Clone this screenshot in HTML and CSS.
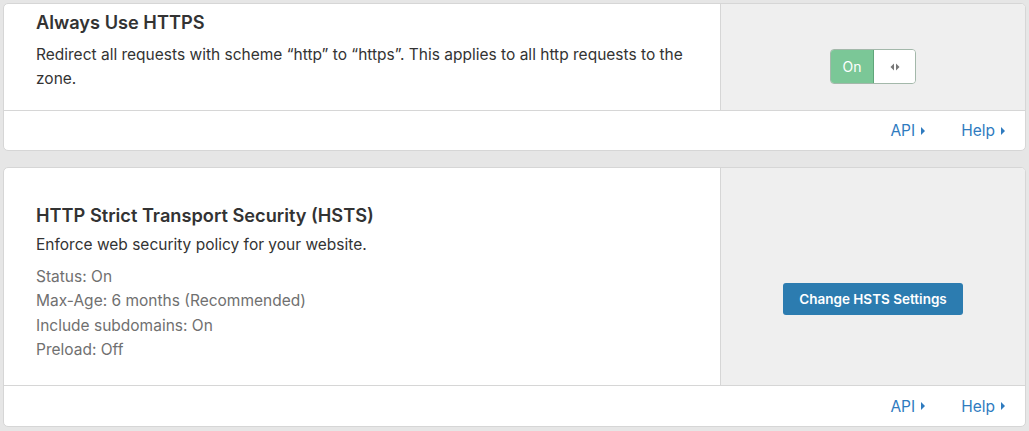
FILE: index.html
```html
<!DOCTYPE html>
<html>
<head>
<meta charset="utf-8">
<link rel="stylesheet" href="styles.css">
</head>
<body>
<div class="page">
  <section class="card">
    <div class="card-body card-body--https">
      <div class="main">
        <h3 class="title">Always Use HTTPS</h3>
        <p class="desc">Redirect all requests with scheme “http” to “https”. This applies to all http requests to the zone.</p>
      </div>
      <div class="side side--toggle">
        <div class="toggle">
          <span class="toggle-on">On</span>
          <span class="toggle-knob">
            <svg width="10" height="8" viewBox="0 0 10 8"><path d="M4 0.5 L0.5 4 L4 7.5 Z" fill="#777"/><path d="M6 0.5 L9.5 4 L6 7.5 Z" fill="#777"/></svg>
          </span>
        </div>
      </div>
    </div>
    <div class="card-footer">
      <a class="link">API <span class="tri"></span></a>
      <a class="link">Help <span class="tri"></span></a>
    </div>
  </section>

  <section class="card">
    <div class="card-body card-body--hsts">
      <div class="main main--hsts">
        <h3 class="title">HTTP Strict Transport Security (HSTS)</h3>
        <p class="desc">Enforce web security policy for your website.</p>
        <ul class="status">
          <li>Status: On</li>
          <li>Max-Age: 6 months (Recommended)</li>
          <li>Include subdomains: On</li>
          <li>Preload: Off</li>
        </ul>
      </div>
      <div class="side side--button">
        <button class="btn">Change HSTS Settings</button>
      </div>
    </div>
    <div class="card-footer card-footer--tall">
      <a class="link">API <span class="tri"></span></a>
      <a class="link">Help <span class="tri"></span></a>
    </div>
  </section>
</div>
</body>
</html>
```
FILE: styles.css
```css
* { box-sizing: border-box; }
html, body { margin: 0; padding: 0; }
body {
  background: #e6e6e6;
  font-family: Inter, "Liberation Sans", sans-serif;
  color: #333;
}
.page {
  padding: 3px 3px 2px;
  display: flex;
  flex-direction: column;
  gap: 16px;
}
.card {
  background: #fff;
  border: 1px solid #d6d6d6;
  border-radius: 5px;
  overflow: hidden;
}
.card-body {
  display: flex;
}
.card-body--https { height: 106px; }
.card-body--hsts { height: 217px; }
.main {
  width: 716px;
  padding: 6px 32px 0 32px;
}
.main--hsts { padding-top: 35px; }
.title {
  margin: 0;
  font-size: 18.2px;
  line-height: 24px;
  font-weight: 600;
  color: #333;
}
.desc {
  margin: 9px 0 0;
  font-size: 15.5px;
  line-height: 24px;
  color: #333;
}
.main--hsts .desc { margin-top: 6px; }
.status {
  list-style: none;
  margin: 8px 0 0;
  padding: 0;
  font-size: 15.5px;
  line-height: 24.3px;
  color: #707070;
}
.side {
  flex: 1;
  background: #efefef;
  border-left: 1px solid #d6d6d6;
  display: flex;
  justify-content: center;
  align-items: flex-start;
}
.side--toggle { padding-top: 45px; }
.side--button { padding-top: 115px; }
.toggle {
  display: flex;
  width: 86px;
  height: 35px;
  border: 1px solid #a3b8aa;
  border-radius: 4px;
  overflow: hidden;
}
.toggle-on {
  width: 43px;
  background: #7bc797;
  color: #fff;
  font-size: 14px;
  display: flex;
  align-items: center;
  justify-content: center;
  border-right: 1px solid #5fa67a;
}
.toggle-knob {
  flex: 1;
  background: #fff;
  display: flex;
  align-items: center;
  justify-content: center;
}
.btn {
  width: 180px;
  height: 32px;
  border: 0;
  border-radius: 3px;
  background: #2c7cb0;
  color: #fff;
  font-family: Inter, "Liberation Sans", sans-serif;
  font-size: 13.5px;
  font-weight: 600;
  padding: 0;
}
.card-footer {
  height: 40px;
  border-top: 1px solid #d6d6d6;
  display: flex;
  justify-content: flex-end;
  align-items: center;
  gap: 36px;
  padding-right: 20px;
}
.card-footer--tall { height: 41px; }
.link {
  color: #2f7bbf;
  font-size: 15.5px;
  display: flex;
  align-items: center;
  gap: 6px;
}
.tri {
  width: 0;
  height: 0;
  border-top: 4.5px solid transparent;
  border-bottom: 4.5px solid transparent;
  border-left: 4.5px solid #2f7bbf;
}
```
